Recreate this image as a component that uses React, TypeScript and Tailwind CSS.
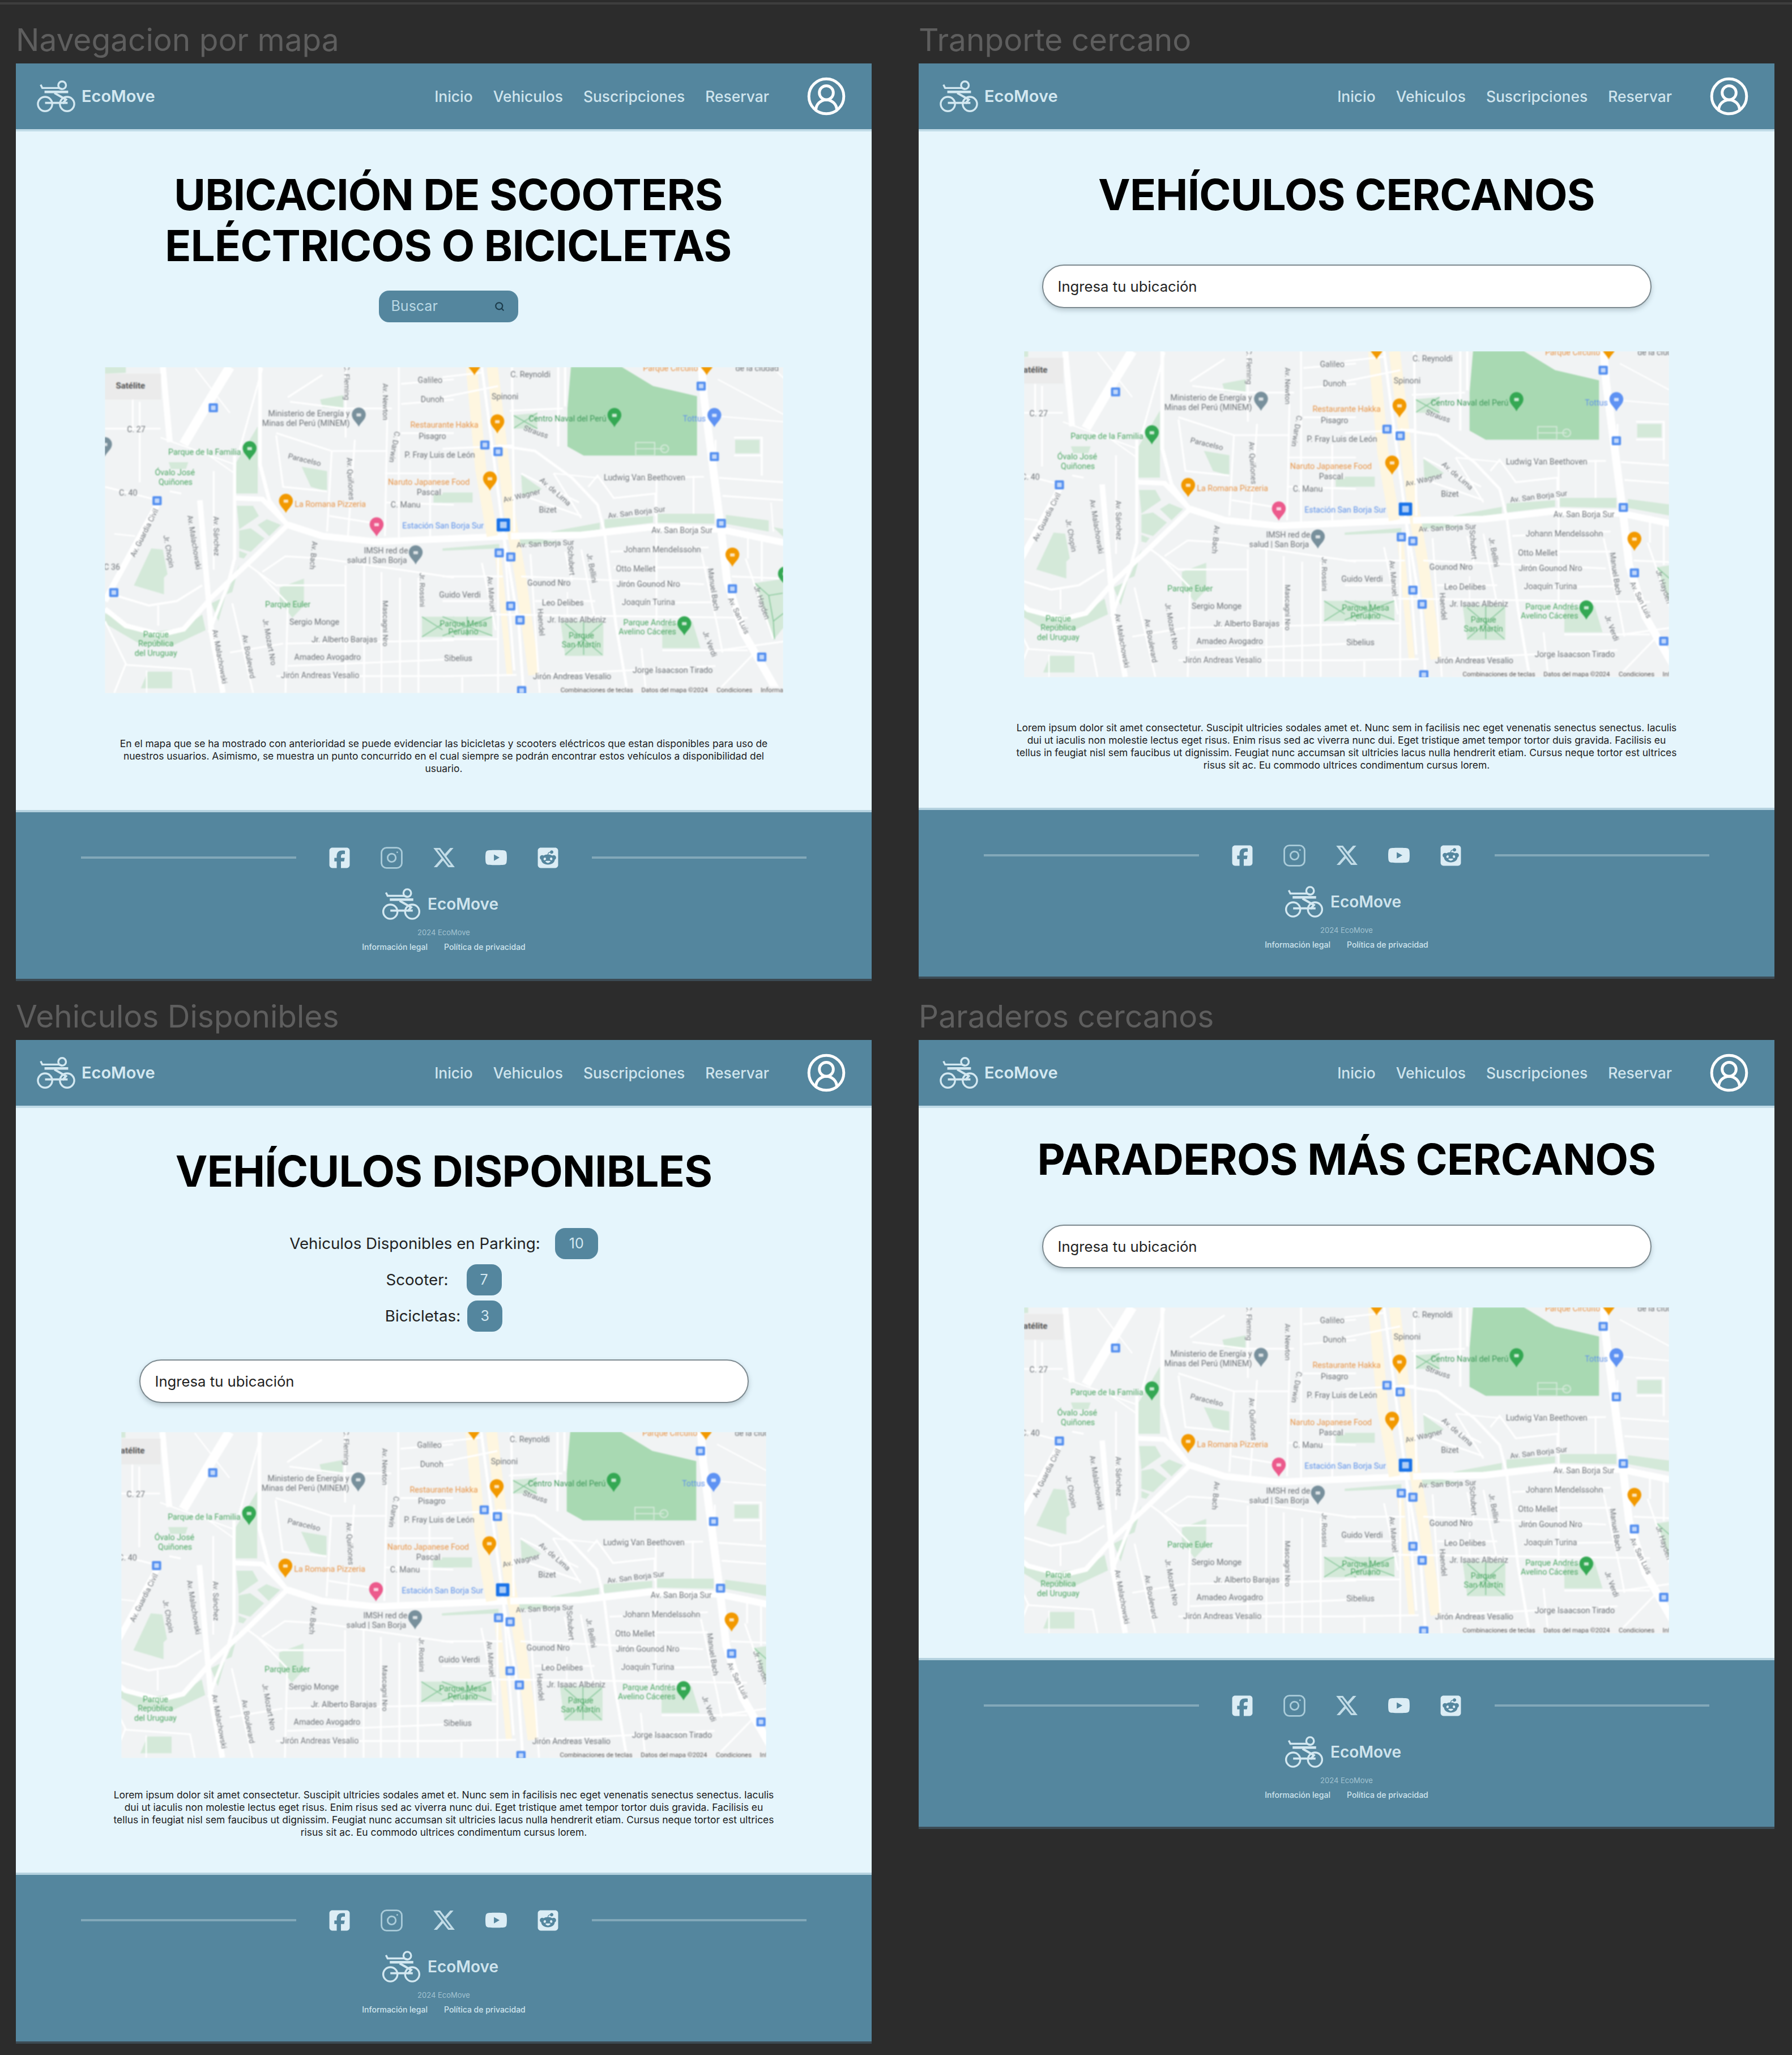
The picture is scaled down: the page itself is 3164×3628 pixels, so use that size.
import React from "react";
import { CircleUserRound, Search, Instagram } from "lucide-react";
import { FaSquareFacebook, FaXTwitter, FaYoutube, FaSquareReddit } from "react-icons/fa6";

const GREY = "#70757a";
const GREEN = "#4fa866";
const ORANGE = "#e8964a";
const BLUE = "#5f93ea";

const parksA = [
  "628,470 720,310 720,610 625,610", "910,490 1020,510 1020,600 950,580", "990,190 1090,170 1090,230 1000,225",
  "630,665 700,665 725,710 640,770", "720,750 760,725 820,750 770,800", "640,775 690,765 750,810 690,870 640,855",
  "640,865 675,880 660,900 640,895", "260,855 310,860 330,970 315,985 315,1060 185,1020",
  "60,1145 190,1210 290,1225 400,1210 480,1150 495,1220 350,1290 200,1275 60,1190", "520,1100 580,1070 550,1180",
  "585,1060 640,930 610,1050", "245,1405 350,1405 350,1480 215,1480", "815,1030 920,990 920,1110 870,1165 815,1090",
  "335,470 420,470 410,500 345,500", "60,45 150,45 150,70 60,75", "1480,615 1568,615 1568,650 1480,650",
  "1430,1160 1568,1160 1568,1250 1430,1250", "1519,605 1649,605 1649,650 1519,650",
];
const parksB = [
  "1265,370 1370,370 1370,430 1265,430", "340,525 430,590 345,620", "0,1160 215,1160 215,1245 0,1245",
  "510,1180 695,1180 695,1335 530,1335", "950,1200 1080,1180 1115,1300 950,1300", "1350,1010 1480,990 1480,1200 1430,1265",
  "700,725 910,710 910,740 700,765", "470,780 680,740 680,770 480,800", "930,700 1175,700 1175,745 930,740",
  "1225,705 1410,730 1410,780 1225,745", "295,815 375,805 520,830 300,840", "0,855 245,835 245,855 0,865",
  "1430,760 1480,770 1480,810", "305,260 410,250 410,320 305,320",
];
const hatchB = [
  "0,1160 215,1245", "0,1245 215,1160", "107,1160 107,1245", "530,1190 690,1330", "690,1190 530,1330", "610,1185 610,1330",
  "1350,1010 1410,1065 1470,1055", "1410,1065 1430,1180 1435,1260", "1430,1180 1480,1140", "305,320 410,250", "305,260 410,320",
];
const roadsA: [number, string][] = [
  [42, "600,45 520,180 400,390"], [26, "310,45 340,380"], [26, "290,650 90,1030 60,1090"], [16, "730,45 730,480 770,640 850,750"],
  [30, "850,750 1000,800 1230,825 1814,800"], [22, "620,630 740,635 850,750 680,920 520,1075 400,1215 300,1240 150,1200 60,1125"],
  [14, "620,440 620,900 590,1020 510,1230"], [24, "470,640 500,1000 520,1230 570,1500"], [10, "90,1060 250,1110 370,1090 480,1020"],
  [8, "290,1110 290,1200"], [8, "60,580 290,640"], [8, "340,600 390,610"], [8, "60,320 300,320"], [8, "210,200 210,560"],
  [8, "180,190 180,330"], [8, "530,510 530,950"], [8, "60,1180 150,1370 100,1500"], [8, "150,1375 430,1395 450,1500"],
  [8, "610,1100 700,1500"], [8, "600,1320 830,1280"], [8, "720,960 850,1100 840,1500"], [8, "680,930 800,1020 1100,1020"],
  [8, "740,960 840,890 1000,900 1568,985"], [8, "1100,930 1100,1500"], [8, "1180,930 1180,1500"], [8, "1255,960 1255,1500"],
  [8, "1335,985 1335,1500"], [8, "1415,985 1415,1500"], [8, "840,1280 1568,1265"], [8, "850,1380 1568,1350"], [8, "800,1425 1568,1425"],
  [8, "800,340 1040,420 1280,420"], [8, "1040,420 1020,780"], [8, "1140,370 1110,800"], [8, "800,350 830,580 1020,600"],
  [8, "860,200 1090,230 1300,230"], [8, "1100,45 1100,360"], [8, "1330,45 1330,820"], [8, "1280,280 1270,800"], [8, "1340,120 1568,100"],
  [8, "1340,210 1568,190"], [8, "1340,340 1568,340"], [8, "1270,520 1568,520"], [8, "1275,650 1568,660"], [8, "1465,460 1465,820"],
  [8, "1030,710 1240,745"], [8, "740,50 640,420"], [8, "850,180 1000,80"], [8, "60,1130 60,1140"], [6, "450,50 600,250"],
  [6, "100,790 190,800"], [6, "510,440 620,520"], [6, "300,360 620,480"], [6, "240,1400 240,1500"],
];
const roadsB: [number, string][] = [
  [34, "1120,45 1130,180 1170,500 1205,780 1230,1000 1300,1230 1450,1500"], [30, "295,800 600,795 900,760 1200,770 1480,830"],
  [12, "240,395 400,420 560,540 670,660 700,780 750,1200 800,1500"], [12, "170,45 265,800 330,1200 350,1500"], [10, "265,800 310,1400"],
  [10, "500,45 500,400"], [10, "530,45 530,220"], [10, "300,45 310,780"], [8, "290,240 520,230"], [8, "0,180 240,130"], [8, "0,90 170,70"],
  [8, "300,395 0,410"], [8, "350,620 600,710"], [8, "480,520 600,720"], [8, "340,520 590,650"], [8, "630,580 670,530 740,630 920,610 920,710"],
  [8, "740,540 1130,535"], [8, "1195,540 1480,560"], [8, "1210,620 1480,640"], [8, "1180,370 1180,530"], [8, "1260,360 1380,360 1380,530"],
  [8, "1260,440 1380,440"], [8, "925,545 925,1200"], [8, "1085,530 1085,700"], [8, "725,870 1150,850"], [8, "740,940 1150,940"],
  [8, "340,980 1130,1015"], [8, "770,1100 1160,1095"], [8, "400,1090 660,1090"], [8, "380,880 420,1500"], [8, "600,860 660,1180"],
  [8, "530,870 560,1000"], [8, "0,980 260,980"], [8, "0,1090 230,1090"], [8, "230,1150 1320,1165"], [8, "0,1260 240,1260"],
  [8, "0,1425 320,1420"], [8, "85,1430 85,1500"], [8, "240,860 240,1500"], [8, "170,920 230,1220"], [8, "1120,880 1190,1210 1210,1320"],
  [8, "1310,900 1430,1260"], [8, "1200,1310 1480,1270"], [8, "1350,1320 1200,1480"], [8, "950,1310 1320,1310"], [8, "860,1300 880,1500"],
  [8, "400,1420 800,1400 1180,1380"], [8, "1320,780 1320,900"], [8, "1380,800 1380,1000"], [8, "1250,980 1480,990"], [6, "1190,100 1480,260"],
  [6, "1420,40 1480,100"], [6, "1420,650 1430,780"], [6, "1140,260 1480,290"], [6, "480,520 670,540"], [6, "540,1050 540,1180"],
];

const labelsA: [string, number, number, string, "start" | "middle" | "end"][] = [
  ["Ministerio de Energía y", 1118, 264, GREY, "end"], ["Minas del Perú (MINEM)", 1118, 307, GREY, "end"],
  ["Parque de la Familia", 648, 437, GREEN, "end"], ["Óvalo José", 362, 527, GREEN, "middle"], ["Quiñones", 365, 570, GREEN, "middle"],
  ["La Romana Pizzeria", 880, 670, ORANGE, "start"], ["Estación San Borja Sur", 1345, 767, BLUE, "start"],
  ["IMSH red de", 1370, 877, GREY, "end"], ["salud | San Borja", 1365, 920, GREY, "end"], ["Parque Euler", 850, 1117, GREEN, "middle"],
  ["Sergio Monge", 965, 1195, GREY, "middle"], ["Jr. Alberto Barajas", 1095, 1275, GREY, "middle"], ["Amadeo Avogadro", 1022, 1354, GREY, "middle"],
  ["Jirón Andreas Vesalio", 990, 1435, GREY, "middle"], ["Parque", 280, 1252, GREEN, "middle"], ["República", 280, 1292, GREEN, "middle"],
  ["del Uruguay", 280, 1334, GREEN, "middle"], ["Restaurante Hakka", 1380, 315, ORANGE, "start"], ["Naruto Japanese Food", 1283, 572, ORANGE, "start"],
  ["Pisagro", 1475, 367, GREY, "middle"], ["P. Fray Luis de León", 1355, 450, GREY, "start"], ["Galileo", 1465, 117, GREY, "middle"],
  ["Dunoh", 1475, 202, GREY, "middle"], ["C. Manu", 1295, 672, GREY, "start"], ["Pascal", 1460, 617, GREY, "middle"],
  ["C. 27", 195, 335, GREY, "middle"], ["C. 40", 160, 620, GREY, "middle"], ["C 36", 90, 950, GREY, "middle"],
];
const labelsB: [string, number, number, string, "start" | "middle" | "end"][] = [
  ["Centro Naval del Perú", 708, 287, "#3f9a5b", "end"], ["Tottus", 1138, 287, BLUE, "end"], ["Ludwig Van Beethoven", 697, 552, GREY, "start"],
  ["Av. San Borja Sur", 1035, 787, GREY, "middle"], ["Johann Mendelssohn", 950, 872, GREY, "middle"], ["Otto Mellet", 835, 957, GREY, "middle"],
  ["Jirón Gounod Nro", 890, 1027, GREY, "middle"], ["Joaquín Turina", 890, 1107, GREY, "middle"], ["Leo Delibes", 520, 1109, GREY, "middle"],
  ["Jr. Isaac Albéniz", 580, 1187, GREY, "middle"], ["Parque Andrés", 1010, 1199, GREEN, "end"], ["Avelino Cáceres", 1010, 1240, GREEN, "end"],
  ["Sibelius", 68, 1357, GREY, "middle"], ["Jirón Andreas Vesalio", 560, 1440, GREY, "middle"], ["Parque Circuito", 1105, 62, ORANGE, "end"],
  ["de la ciudad", 1360, 62, GREY, "middle"], ["Parque", 600, 1257, GREEN, "middle"], ["San Martín", 600, 1297, GREEN, "middle"],
  ["Parque Mesa", 90, 1203, GREEN, "middle"], ["Peruano", 90, 1240, GREEN, "middle"], ["Guido Verdi", 75, 1074, GREY, "middle"],
  ["Jorge Isaacson Tirado", 995, 1410, GREY, "middle"], ["Gounod Nro", 460, 1022, GREY, "middle"], ["Bizet", 455, 695, GREY, "middle"],
  ["C. Reynoldi", 380, 90, GREY, "middle"], ["Spinoni", 270, 190, GREY, "middle"],
];
const slanted: [string, number, number, number][] = [
  ["Av. Guardia Civil", 240, 790, -64], ["Jr. Chopin", 325, 870, 80], ["Av. Malachowski", 435, 830, 81], ["Av. Sánchez", 530, 800, 89],
  ["Av. Malachowski", 545, 1340, 80], ["Av. Boulevard", 670, 1340, 80], ["Jr. Mozart Nro", 760, 1275, 80], ["Paracelso", 920, 470, 14],
  ["Av. Quiñones", 1110, 545, 87], ["C. Darwin", 1300, 400, 100], ["Av. Newton", 1262, 200, 90], ["C. Fleming", 1095, 115, 90],
  ["Jr. Rossini", 1420, 1040, 90], ["Mascagni Nro", 1262, 1190, 90], ["Av. Bach", 950, 885, 95],
];
const slantedB: [string, number, number, number][] = [
  ["Av. San Borja Sur", 840, 705, -7], ["Av. San Borja Sur", 445, 845, -3], ["Av. de Lima", 480, 610, 42], ["Strauss", 400, 345, 20],
  ["Av. Wagner", 345, 630, -14], ["Manuel Bach", 1160, 1040, 82], ["Av. San Luis", 1270, 1160, 65], ["Jr. Hayden", 1370, 1100, 72],
  ["Jr. Verdi", 1145, 1285, 70], ["Haendel", 415, 1185, 86], ["Jr. Bellini", 635, 945, 80], ["Schubert", 545, 910, 86], ["Av. Manuel", 200, 1060, 85],
];

function Pin({ x, y, color }: { x: number; y: number; color: string }) {
  return (
    <g transform={`translate(${x},${y})`}>
      <path d="M0,52 C-6,34 -30,20 -30,-2 A30,32 0 1 1 30,-2 C30,20 6,34 0,52 Z" fill={color} />
      <rect x="-10" y="-8" width="20" height="14" rx="2" fill="#fff" fillOpacity="0.75" />
    </g>
  );
}

function Stop({ x, y, s = 40, color = "#5590f0" }: { x: number; y: number; s?: number; color?: string }) {
  return (
    <g>
      <rect x={x - s / 2} y={y - s / 2} width={s} height={s} rx="5" fill={color} />
      <rect x={x - s / 4} y={y - s / 4} width={s / 2} height={s / 2} rx="2" fill="#fff" fillOpacity="0.65" />
    </g>
  );
}

function MapLabels({ items }: { items: typeof labelsA }) {
  return (
    <>
      {items.map(([t, x, y, c, a], i) => (
        <text key={i} x={x} y={y} fill={c} textAnchor={a} fontSize="35" fontFamily="Roboto, sans-serif">
          {t}
        </text>
      ))}
    </>
  );
}

function Slanted({ items }: { items: typeof slanted }) {
  return (
    <>
      {items.map(([t, x, y, r], i) => (
        <text key={i} x={x} y={y} fill={GREY} textAnchor="middle" fontSize="33" fontFamily="Roboto, sans-serif" transform={`rotate(${r} ${x} ${y})`}>
          {t}
        </text>
      ))}
    </>
  );
}

function MapPicture({ cropped }: { cropped?: boolean }) {
  return (
    <div className={`${cropped ? "w-[1139px]" : "w-[1198px]"} h-[576px] overflow-hidden shrink-0`}>
      <svg
        className="w-full h-full block blur-[1.1px]"
        viewBox={cropped ? "132 45 2790 1457" : "59 45 2933 1457"}
        preserveAspectRatio="none"
      >
        <rect x="0" y="0" width="3200" height="1600" fill="#f1f3f4" />
        {parksA.map((p, i) => <polygon key={i} points={p} fill="#d4e9d9" />)}
        {roadsA.map(([w, p], i) => <polyline key={i} points={p} fill="none" stroke="#fff" strokeWidth={w} />)}
        <polyline points="1430,1160 1568,1250" fill="none" stroke="#86c799" strokeWidth="4" />
        <polyline points="1430,1250 1568,1160" fill="none" stroke="#86c799" strokeWidth="4" />
        <g transform="translate(1519,0)">
          <polygon points="555,45 775,45 910,130 1100,175 1100,440 610,440 540,400 540,230" fill="#a8d9b2" />
          {parksB.map((p, i) => <polygon key={i} points={p} fill="#d4e9d9" />)}
          {hatchB.map((p, i) => <polyline key={i} points={p} fill="none" stroke="#86c799" strokeWidth="4" />)}
          <polyline points="125,45 165,500 215,800" fill="none" stroke="#fef6e0" strokeWidth="48" />
          <polyline points="215,45 290,700 340,1000 395,1420" fill="none" stroke="#fef6e0" strokeWidth="48" />
          <polyline points="240,880 290,1420" fill="none" stroke="#fef6e0" strokeWidth="26" />
          {roadsB.map(([w, p], i) => <polyline key={i} points={p} fill="none" stroke="#fff" strokeWidth={w} />)}
          <rect x="835" y="382" width="82" height="58" fill="none" stroke="#d4e9d9" strokeWidth="5" />
          <line x1="835" y1="410" x2="960" y2="410" stroke="#d4e9d9" strokeWidth="5" />
          <circle cx="960" cy="410" r="17" fill="none" stroke="#d4e9d9" strokeWidth="5" />
          <rect x="462" y="1472" width="1020" height="34" fill="#f1f3f4" fillOpacity="0.75" />
          <MapLabels items={labelsB} />
          <Slanted items={slantedB} />
          {["Combinaciones de teclas|510", "Datos del mapa ©2024|860", "Condiciones|1185", "Informar|1375"].map((s) => {
            const [t, x] = s.split("|");
            return <text key={t} x={x} y="1498" fontSize="28" fill="#555" fontFamily="Roboto, sans-serif">{t}</text>;
          })}
          <Pin x={138} y={30} color="#f29900" />
          <Pin x={1142} y={30} color="#f29900" />
          <Pin x={237} y={290} color="#f29900" />
          <Pin x={205} y={545} color="#f29900" />
          <Pin x={1253} y={885} color="#f29900" />
          <Pin x={743} y={262} color="#34a853" />
          <Pin x={1045} y={1192} color="#34a853" />
          <Pin x={1480} y={970} color="#34a853" />
          <Pin x={1175} y={262} color="#5e92f3" />
          {[[1118,130],[183,393],[240,423],[1175,445],[1205,743],[245,875],[295,893],[1253,1035],[295,1112],[335,1175],[1380,1340],[342,1490]].map(([x, y], i) => <Stop key={i} x={x} y={y} />)}
          <Stop x={263} y={750} s={58} color="#1a73e8" />
        </g>
        <MapLabels items={labelsA} />
        <Slanted items={slanted} />
        <Pin x={1157} y={260} color="#78909c" />
        <Pin x={685} y={410} color="#34a853" />
        <Pin x={842} y={645} color="#f29900" />
        <Pin x={1234} y={750} color="#ec5a8c" />
        <Pin x={1403} y={875} color="#78909c" />
        <Pin x={60} y={392} color="#78909c" />
        {[[528,227],[285,642],[98,1052]].map(([x, y], i) => <Stop key={i} x={x} y={y} />)}
        <rect x="59" y="75" width="243" height="115" fill="#ebebeb" />
        <text x="170" y="142" textAnchor="middle" fontSize="37" fontWeight="700" fill="#555" fontFamily="Roboto, sans-serif">Satélite</text>
      </svg>
    </div>
  );
}

function Logo({ className }: { className?: string }) {
  return (
    <svg viewBox="0 0 72 58" className={className} fill="none" stroke="#d3e8f1">
      <circle cx="16" cy="43" r="13" strokeWidth="3.5" />
      <circle cx="56" cy="43" r="13" strokeWidth="3.5" />
      <path d="M16 41H57" strokeWidth="4" />
      <circle cx="47" cy="9" r="7" strokeWidth="3.5" />
      <path d="M8 8L11 14H41L47 16" strokeWidth="3.5" />
      <path d="M15 21H58" strokeWidth="4.5" />
      <path d="M33 23L54 35L48 42" strokeWidth="4" />
    </svg>
  );
}

function Header() {
  return (
    <header className="h-[120px] shrink-0 bg-[#54869e] border-b-4 border-[#c0dbe7] flex items-center pl-[36px] pr-[43px]">
      <Logo className="w-[70px] h-[58px] mr-[10px]" />
      <span className="text-[29px] font-semibold text-[#d3e8f1]">EcoMove</span>
      <nav className="ml-auto mt-[2px] flex items-center gap-[36px] text-[26.4px] font-medium text-[#cfe4ed]">
        <span>Inicio</span>
        <span>Vehiculos</span>
        <span>Suscripciones</span>
        <span>Reservar</span>
      </nav>
      <CircleUserRound className="ml-[64px] w-[74px] h-[74px] text-white" strokeWidth={1.6} />
    </header>
  );
}

function Footer() {
  return (
    <footer className="h-[298px] shrink-0 bg-[#54869e] border-t-4 border-[#b5d2df] flex flex-col items-center pt-[62px] px-[115px] shadow-[0_4px_0_#3c4b54]">
      <div className="w-full h-[36px] flex items-center text-[#dcedf5]">
        <div className="flex-1 h-[4px] bg-[#82a8b9]" />
        <div className="flex items-center gap-[56px] mx-[59px]">
          <FaSquareFacebook className="w-[41px] h-[41px] -mx-[2.5px] shrink-0" />
          <Instagram className="w-[43px] h-[43px] -mx-[3.5px] shrink-0 text-[#a9cbd9]" strokeWidth={1.6} />
          <FaXTwitter className="w-[42px] h-[42px] -mx-[3px] shrink-0 text-[#c2dce7]" />
          <FaYoutube className="w-[40px] h-[40px] -mx-[2px] shrink-0" />
          <FaSquareReddit className="w-[41px] h-[41px] -mx-[2.5px] shrink-0" />
        </div>
        <div className="flex-1 h-[4px] bg-[#82a8b9]" />
      </div>
      <div className="mt-[36px] flex items-center gap-[11px] mr-[14px]">
        <Logo className="w-[71px] h-[56px]" />
        <span className="text-[28px] font-semibold text-[#cfe4ed]">EcoMove</span>
      </div>
      <div className="mt-[13px] text-[13px] leading-[18px] text-[#a2c3d1]">2024 EcoMove</div>
      <div className="mt-[7px] flex gap-[29px] text-[14px] leading-[20px] font-medium text-[#cfe4ed]">
        <span>Información legal</span>
        <span>Política de privacidad</span>
      </div>
    </footer>
  );
}

function Title({ children, className = "" }: { children: React.ReactNode; className?: string }) {
  return <h1 className={`text-[76px] leading-[90px] font-bold text-black text-center tracking-[-0.7px] ${className}`}>{children}</h1>;
}

function LocationInput({ className = "" }: { className?: string }) {
  return (
    <div className={`w-[1076px] h-[77px] shrink-0 rounded-full bg-white border-2 border-[#7d8a90] shadow-[0_4px_8px_rgba(80,100,110,0.3)] flex items-center pl-[26px] pt-[2px] text-[25.7px] text-[#222] ${className}`}>
      Ingresa tu ubicación
    </div>
  );
}

function Frame({ children, bodyClass }: { children: React.ReactNode; bodyClass: string }) {
  return (
    <div className="w-[1511px] flex flex-col">
      <Header />
      <main className={`bg-[#e5f5fc] flex flex-col items-center ${bodyClass}`}>{children}</main>
      <Footer />
    </div>
  );
}

function Screen({ label, children }: { label: string; children: React.ReactNode }) {
  return (
    <section>
      <h2 className="h-[72px] text-[55px] leading-[60px] text-[#5e5e5e]">{label}</h2>
      {children}
    </section>
  );
}

function Lorem({ className = "" }: { className?: string }) {
  return (
    <p className={`text-[17.4px] leading-[22px] text-[#1c1c1c] text-center whitespace-nowrap ${className}`}>
      Lorem ipsum dolor sit amet consectetur. Suscipit ultricies sodales amet et. Nunc sem in facilisis nec eget venenatis senectus senectus. Iaculis<br />
      dui ut iaculis non molestie lectus eget risus. Enim risus sed ac viverra nunc dui. Eget tristique amet tempor tortor duis gravida. Facilisis eu<br />
      tellus in feugiat nisl sem faucibus ut dignissim. Feugiat nunc accumsan sit ultricies lacus nulla hendrerit etiam. Cursus neque tortor est ultrices<br />
      risus sit ac. Eu commodo ultrices condimentum cursus lorem.
    </p>
  );
}

function Badge({ children, className = "" }: { children: React.ReactNode; className?: string }) {
  return (
    <span className={`h-[55px] rounded-[18px] bg-[#54869e] text-[#d3e8f1] text-[25px] flex items-center justify-center ${className}`}>
      {children}
    </span>
  );
}

export default function App() {
  return (
    <div className="w-[3164px] h-[3628px] bg-[#2c2c2c] overflow-hidden font-['Inter',sans-serif]">
      <div className="h-[4px] mt-[4px] bg-[#3e3e3e]" />
      <div className="mt-[32px] grid grid-cols-[1511px_1511px] grid-rows-[1724px_auto] gap-x-[83px] px-[28px]">
        <Screen label="Navegacion por mapa">
          <Frame bodyClass="h-[1198px] pt-[66px]">
            <Title className="pl-[16px]">UBICACIÓN DE SCOOTERS<br />ELÉCTRICOS O BICICLETAS</Title>
            <div className="mt-[35px] ml-[16px] w-[246px] h-[56px] shrink-0 rounded-[18px] bg-[#54869e] flex items-center justify-between pl-[22px] pr-[24px] text-[25px] text-[#b9d8e4]">
              Buscar
              <Search className="w-[18px] h-[18px] text-[#1d3d4d]" strokeWidth={3} />
            </div>
            <div className="mt-[79px]"><MapPicture /></div>
            <p className="mt-[78px] text-[17.4px] leading-[22px] text-[#1c1c1c] text-center whitespace-nowrap">
              En el mapa que se ha mostrado con anterioridad se puede evidenciar las bicicletas y scooters eléctricos que estan disponibles para uso de<br />
              nuestros usuarios. Asimismo, se muestra un punto concurrido en el cual siempre se podrán encontrar estos vehículos a disponibilidad del<br />
              usuario.
            </p>
          </Frame>
        </Screen>
        <Screen label="Tranporte cercano">
          <Frame bodyClass="h-[1194px] pt-[66px]">
            <Title>VEHÍCULOS CERCANOS</Title>
            <LocationInput className="mt-[79px]" />
            <div className="mt-[76px]"><MapPicture cropped /></div>
            <Lorem className="mt-[78px]" />
          </Frame>
        </Screen>
        <Screen label="Vehiculos Disponibles">
          <Frame bodyClass="h-[1350px] pt-[66px]">
            <Title>VEHÍCULOS DISPONIBLES</Title>
            <div className="mt-[56px] flex flex-col items-center gap-[9px] text-[27.7px] text-[#222]">
              <div className="flex items-center gap-[26px]">Vehiculos Disponibles en Parking:<Badge className="w-[76px]">10</Badge></div>
              <div className="flex items-center gap-[32px]">Scooter:<Badge className="w-[62px]">7</Badge></div>
              <div className="flex items-center gap-[12px]">Bicicletas:<Badge className="w-[62px]">3</Badge></div>
            </div>
            <LocationInput className="mt-[49px]" />
            <div className="mt-[51px]"><MapPicture cropped /></div>
            <Lorem className="mt-[54px]" />
          </Frame>
        </Screen>
        <Screen label="Paraderos cercanos">
          <Frame bodyClass="h-[971px] pt-[45px]">
            <Title>PARADEROS MÁS CERCANOS</Title>
            <LocationInput className="mt-[71px]" />
            <div className="mt-[69px]"><MapPicture cropped /></div>
          </Frame>
        </Screen>
      </div>
    </div>
  );
}
